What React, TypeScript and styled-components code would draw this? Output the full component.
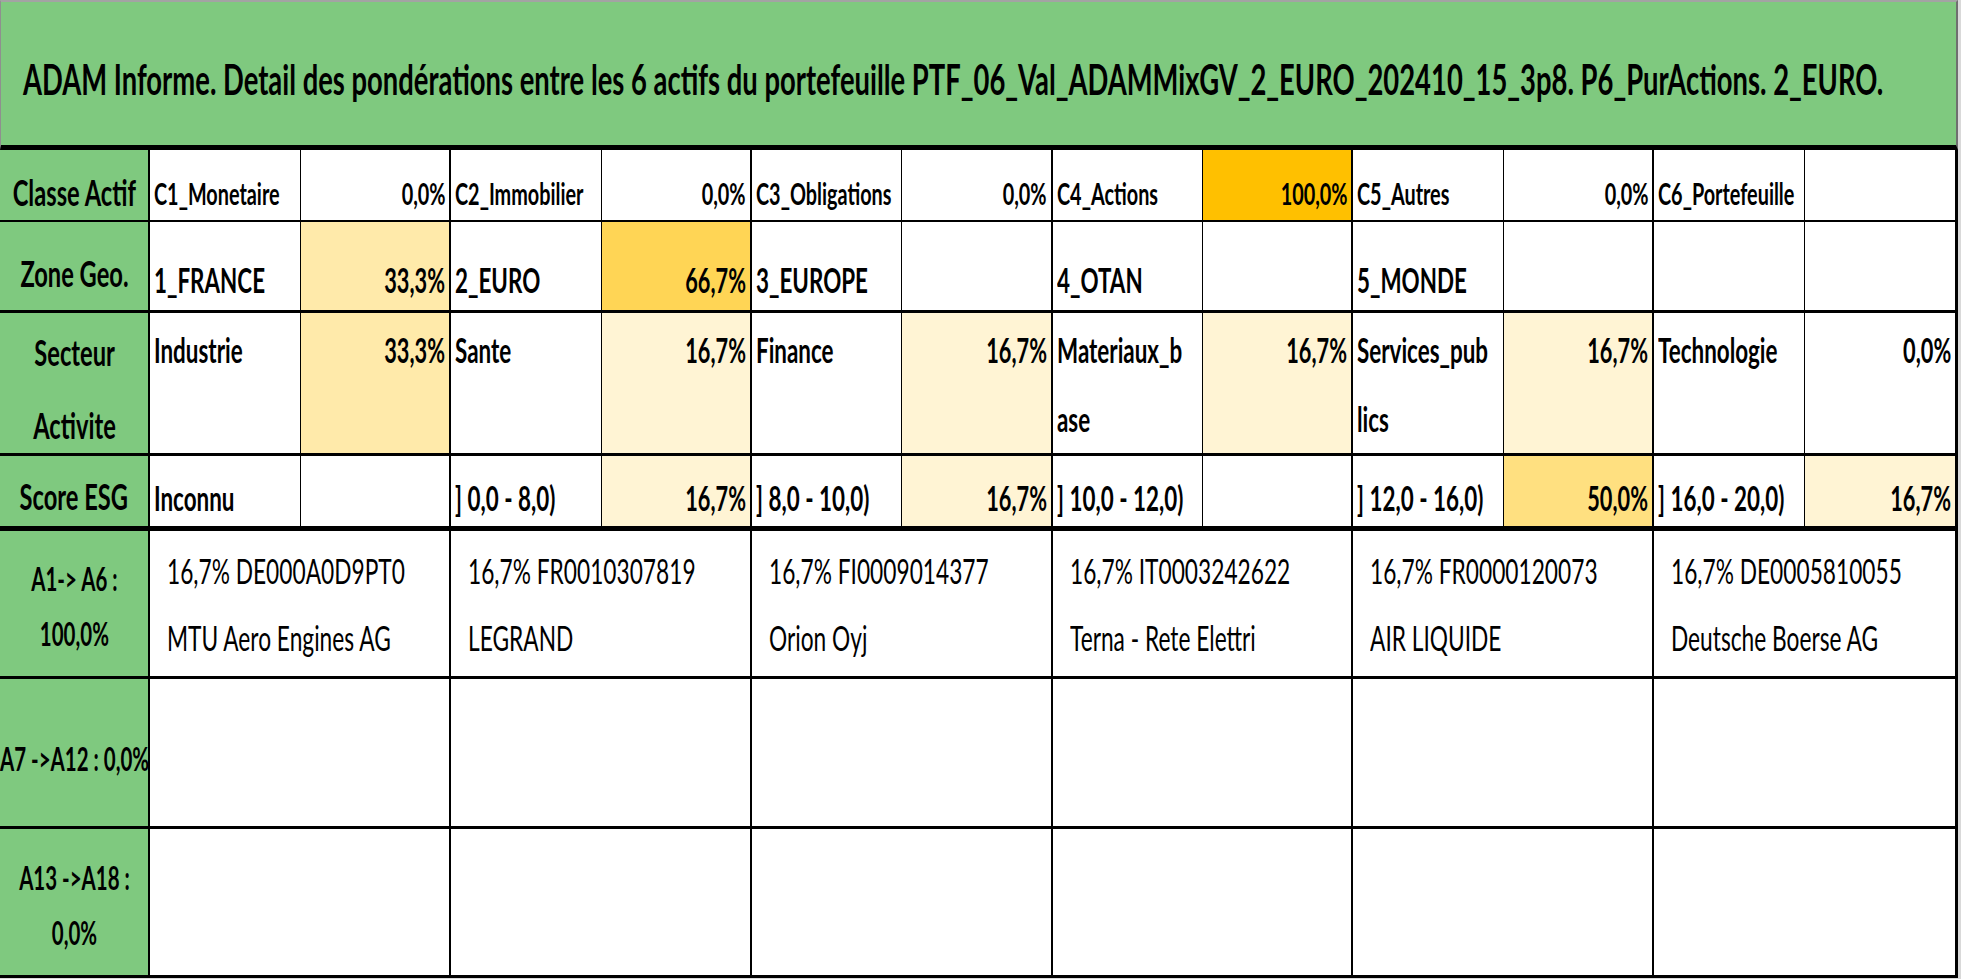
import React from 'react';
import styled, { createGlobalStyle } from 'styled-components';

const SX = 0.64;
const GREEN = '#7fc97f';

const GlobalStyle = createGlobalStyle`
  html, body { margin: 0; padding: 0; background: #d9d9d9; overflow: hidden; }
  #root { width: 1961px; height: 979px; }
`;

const Sheet = styled.div`
  width: 1958px;
  height: 978px;
  background: #fff;
  font-family: Lato, "Open Sans", sans-serif;
  color: #000;
  display: flex;
  flex-direction: column;
`;

const TitleBar = styled.header`
  box-sizing: border-box;
  height: 150px;
  flex: none;
  background: ${GREEN};
  border-top: 2px solid #a3a3a3;
  border-left: 1px solid #8f8f8f;
  border-right: 2px solid #6f6f6f;
  border-bottom: 5px solid #000;
  display: flex;
  align-items: center;
  padding: 12px 0 0 22px;
  font-size: 42.8px;
  font-weight: 700;
  line-height: 1;
  overflow: hidden;
`;

const Squeeze = styled.span<{ $origin?: 'left' | 'right' | 'center' }>`
  display: inline-block;
  white-space: nowrap;
  transform: scaleX(${SX});
  transform-origin: ${(p) => p.$origin ?? 'left'} center;
`;

const Grid = styled.div`
  box-sizing: border-box;
  width: 1958px;
  flex: 1;
  display: grid;
  grid-template-columns: repeat(13, minmax(0, 1fr));
  grid-template-rows: 72px 91px 143px 75px 148px 150px 149px;
  border-right: 3px solid #000;
`;

const Cell = styled.div<{ $right: number; $bottom: number; $bg?: string; $span?: number }>`
  box-sizing: border-box;
  min-width: 0;
  overflow: hidden;
  display: flex;
  border-right: ${(p) => p.$right}px solid #000;
  border-bottom: ${(p) => p.$bottom}px solid #000;
  background: ${(p) => p.$bg ?? '#fff'};
  grid-column: span ${(p) => p.$span ?? 1};
`;

const LabelCell = styled(Cell)<{ $size: number; $lh: number; $pt: number }>`
  background: ${GREEN};
  justify-content: center;
  align-items: center;
  text-align: center;
  font-weight: 700;
  font-size: ${(p) => p.$size}px;
  line-height: ${(p) => p.$lh}px;
  padding-top: ${(p) => p.$pt}px;
`;

const NameCell = styled(Cell)<{ $size: number; $top: boolean; $pad: number; $lh: number }>`
  align-items: ${(p) => (p.$top ? 'flex-start' : 'flex-end')};
  font-weight: 700;
  font-size: ${(p) => p.$size}px;
  line-height: ${(p) => p.$lh}px;
  padding: ${(p) => (p.$top ? `${p.$pad}px 4px 0 4px` : `0 4px ${p.$pad}px 4px`)};
`;

const ValueCell = styled(NameCell)`
  justify-content: flex-end;
  padding-right: 4px;
`;

const AssetCell = styled(Cell)`
  align-items: center;
  font-weight: 400;
  font-size: 35.5px;
  line-height: 67px;
  padding: 0 0 0 17px;
`;

type Val = number | null;
type TopRow = {
  label: string[];
  labelLh: number;
  labelPt: number;
  size: number;
  valSize: number;
  top: boolean;
  pad: number;
  lh: number;
  bottom: number;
  cells: [string[], Val][];
};

const topRows: TopRow[] = [
  {
    label: ['Classe Actif'],
    labelLh: 37,
    labelPt: 13,
    size: 31,
    valSize: 31,
    top: false,
    pad: 11,
    lh: 31,
    bottom: 2,
    cells: [
      [['C1_Monetaire'], 0],
      [['C2_Immobilier'], 0],
      [['C3_Obligations'], 0],
      [['C4_Actions'], 100],
      [['C5_Autres'], 0],
      [['C6_Portefeuille'], null],
    ],
  },
  {
    label: ['Zone Geo.'],
    labelLh: 37,
    labelPt: 13,
    size: 35,
    valSize: 34,
    top: false,
    pad: 13,
    lh: 35,
    bottom: 3,
    cells: [
      [['1_FRANCE'], 33.3],
      [['2_EURO'], 66.7],
      [['3_EUROPE'], null],
      [['4_OTAN'], null],
      [['5_MONDE'], null],
      [[''], null],
    ],
  },
  {
    label: ['Secteur', 'Activite'],
    labelLh: 73,
    labelPt: 10,
    size: 35,
    valSize: 34,
    top: true,
    pad: 2,
    lh: 69,
    bottom: 3,
    cells: [
      [['Industrie'], 33.3],
      [['Sante'], 16.7],
      [['Finance'], 16.7],
      [['Materiaux_b', 'ase'], 16.7],
      [['Services_pub', 'lics'], 16.7],
      [['Technologie'], 0],
    ],
  },
  {
    label: ['Score ESG'],
    labelLh: 37,
    labelPt: 8,
    size: 35,
    valSize: 34,
    top: false,
    pad: 11,
    lh: 35,
    bottom: 5,
    cells: [
      [['Inconnu'], null],
      [['] 0,0 - 8,0)'], 16.7],
      [['] 8,0 - 10,0)'], 16.7],
      [['] 10,0 - 12,0)'], null],
      [['] 12,0 - 16,0)'], 50],
      [['] 16,0 - 20,0)'], 16.7],
    ],
  },
];

type BottomRow = { label: string[]; labelPt: number; bottom: number; assets: string[][] };

const bottomRows: BottomRow[] = [
  {
    label: ['A1-> A6 :', '100,0%'],
    labelPt: 5,
    bottom: 3,
    assets: [
      ['16,7% DE000A0D9PT0', 'MTU Aero Engines AG'],
      ['16,7% FR0010307819', 'LEGRAND'],
      ['16,7% FI0009014377', 'Orion Oyj'],
      ['16,7% IT0003242622', 'Terna - Rete Elettri'],
      ['16,7% FR0000120073', 'AIR LIQUIDE'],
      ['16,7% DE0005810055', 'Deutsche Boerse AG'],
    ],
  },
  { label: ['A7 ->A12 : 0,0%'], labelPt: 12, bottom: 3, assets: [[], [], [], [], [], []] },
  { label: ['A13 ->A18 :', '0,0%'], labelPt: 6, bottom: 3, assets: [[], [], [], [], [], []] },
];

const heat = (v: Val) => {
  if (v === null || v === 0) return '#ffffff';
  const t = v / 100;
  return `rgb(255, ${Math.round(255 - 63 * t)}, ${Math.round(255 - 255 * t)})`;
};

const fmt = (v: Val) => (v === null ? '' : `${v.toFixed(1).replace('.', ',')}%`);

const Lines = ({ lines, origin }: { lines: string[]; origin: 'left' | 'right' | 'center' }) => (
  <Squeeze $origin={origin}>
    {lines.map((l, i) => (
      <React.Fragment key={i}>
        {i > 0 && <br />}
        {l}
      </React.Fragment>
    ))}
  </Squeeze>
);

export default function App() {
  return (
    <>
      <GlobalStyle />
      <Sheet>
        <TitleBar>
          <Squeeze>
            ADAM Informe. Detail des pondérations entre les 6 actifs du portefeuille
            PTF_06_Val_ADAMMixGV_2_EURO_202410_15_3p8. P6_PurActions. 2_EURO.
          </Squeeze>
        </TitleBar>
        <Grid>
          {topRows.map((row, r) => (
            <React.Fragment key={`t${r}`}>
              <LabelCell $right={2} $bottom={row.bottom} $size={37} $lh={row.labelLh} $pt={row.labelPt}>
                <Lines lines={row.label} origin="center" />
              </LabelCell>
              {row.cells.map(([name, v], c) => (
                <React.Fragment key={c}>
                  <NameCell
                    $right={1}
                    $bottom={row.bottom}
                    $size={row.size}
                    $top={row.top}
                    $pad={row.pad}
                    $lh={row.lh}
                  >
                    <Lines lines={name} origin="left" />
                  </NameCell>
                  <ValueCell
                    $right={c === 5 ? 0 : 2}
                    $bottom={row.bottom}
                    $bg={heat(v)}
                    $size={row.valSize}
                    $top={row.top}
                    $pad={row.pad}
                    $lh={row.lh}
                  >
                    <Lines lines={[fmt(v)]} origin="right" />
                  </ValueCell>
                </React.Fragment>
              ))}
            </React.Fragment>
          ))}
          {bottomRows.map((row, r) => (
            <React.Fragment key={`b${r}`}>
              <LabelCell $right={2} $bottom={row.bottom} $size={32} $lh={55} $pt={row.labelPt}>
                <Lines lines={row.label} origin="center" />
              </LabelCell>
              {row.assets.map((a, c) => (
                <AssetCell key={c} $span={2} $right={c === 5 ? 0 : 2} $bottom={row.bottom}>
                  <Lines lines={a} origin="left" />
                </AssetCell>
              ))}
            </React.Fragment>
          ))}
        </Grid>
      </Sheet>
    </>
  );
}
